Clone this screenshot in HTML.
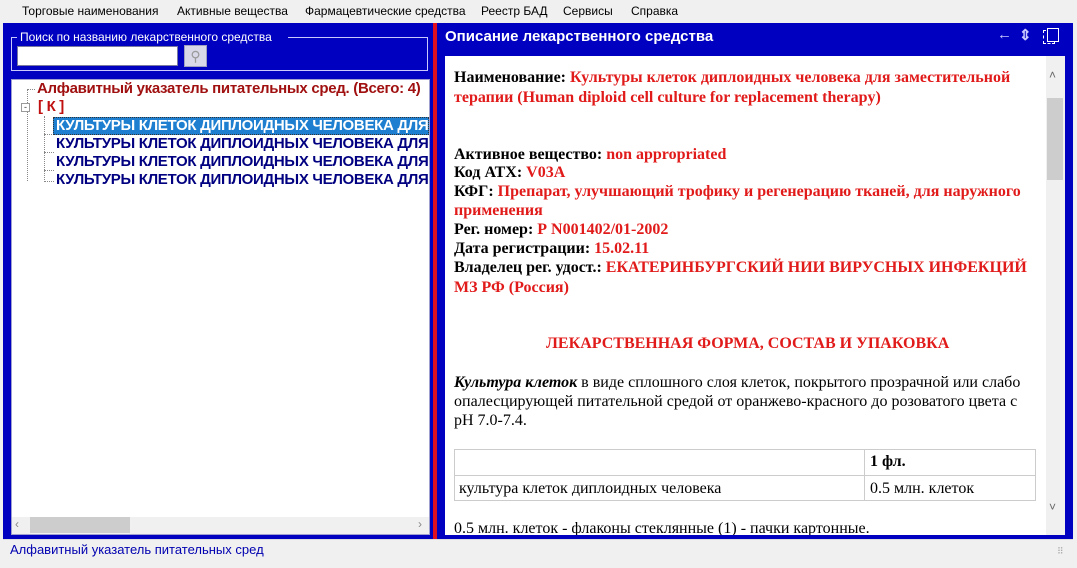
<!DOCTYPE html>
<html><head><meta charset="utf-8"><style>
*{margin:0;padding:0;box-sizing:border-box}
body{width:1077px;height:568px;background:#f0f0f0;position:relative;overflow:hidden;font-family:"Liberation Sans",sans-serif}
.a{position:absolute;white-space:nowrap}
.menu span{position:absolute;top:4px;font-size:12px;color:#000}
.tr{font-size:15px;font-weight:bold;color:#000080;letter-spacing:-0.3px}
.s{font-family:"Liberation Serif",serif;font-size:16px;color:#000}
.b{font-weight:bold}
.r{color:#e11a1a;font-weight:bold}
</style></head><body>
<div class="menu">
<span style="left:22px">Торговые наименования</span>
<span style="left:177px">Активные вещества</span>
<span style="left:305px">Фармацевтические средства</span>
<span style="left:481px">Реестр БАД</span>
<span style="left:563px">Сервисы</span>
<span style="left:631px">Справка</span>
</div>
<div class="a" style="left:3px;top:23px;width:430px;height:516px;background:#0000c0"></div>
<div class="a" style="left:11px;top:37px;width:417px;height:34px;border:1px solid #c8c8ff;border-top:none"></div>
<div class="a" style="left:11px;top:37px;width:6px;border-top:1px solid #c8c8ff"></div>
<div class="a" style="left:288px;top:37px;width:140px;border-top:1px solid #c8c8ff"></div>
<div class="a" style="left:20px;top:30px;font-size:12px;color:#fff">Поиск по названию лекарственного средства</div>
<div class="a" style="left:17px;top:46px;width:161px;height:20px;background:#fff;border:1px solid #7a7aa0"></div>
<div class="a" style="left:184px;top:45px;width:23px;height:22px;background:#d8d8e8;border:1px solid #a0a0c0;color:#999;font-size:14px;text-align:center;line-height:20px">⚲</div>
<div class="a" style="left:11px;top:79px;width:419px;height:456px;background:#fff;border:1px solid #a0a0d0"></div>
<div class="a" style="left:27px;top:89px;height:92px;border-left:1px dotted #888"></div>
<div class="a" style="left:27px;top:89px;width:8px;border-top:1px dotted #888"></div>
<div class="a" style="left:21px;top:103px;width:9px;height:9px;border:1px solid #999;background:#fff;font-size:9px;line-height:6px;text-align:center;color:#333">-</div>
<div class="a" style="left:44px;top:116px;height:66px;border-left:1px dotted #888"></div>
<div class="a" style="left:44px;top:134px;width:10px;border-top:1px dotted #888"></div>
<div class="a" style="left:44px;top:152px;width:10px;border-top:1px dotted #888"></div>
<div class="a" style="left:44px;top:170px;width:10px;border-top:1px dotted #888"></div>
<div class="a" style="left:44px;top:181px;width:10px;border-top:1px dotted #888"></div>
<div class="a" style="left:11px;top:80px;width:418px;height:120px;overflow:hidden">
<div class="a tr" style="left:26px;top:0px;color:#a01010">Алфавитный указатель питательных сред. (Всего: 4)</div>
<div class="a tr" style="left:27px;top:18px;color:#c01010">[ К ]</div>
<div class="a" style="left:42px;top:37px;width:376px;height:18px;background:#1e7fd0;border:1px dotted #333"></div>
<div class="a tr" style="left:45px;top:37px;color:#fff">КУЛЬТУРЫ КЛЕТОК ДИПЛОИДНЫХ ЧЕЛОВЕКА ДЛЯ ЗАМ</div>
<div class="a tr" style="left:45px;top:55px">КУЛЬТУРЫ КЛЕТОК ДИПЛОИДНЫХ ЧЕЛОВЕКА ДЛЯ ЗАМ</div>
<div class="a tr" style="left:45px;top:73px">КУЛЬТУРЫ КЛЕТОК ДИПЛОИДНЫХ ЧЕЛОВЕКА ДЛЯ ЗАМ</div>
<div class="a tr" style="left:45px;top:91px">КУЛЬТУРЫ КЛЕТОК ДИПЛОИДНЫХ ЧЕЛОВЕКА ДЛЯ ЗАМ</div>
</div>
<div class="a" style="left:12px;top:517px;width:417px;height:17px;background:#f0f0f0"></div>
<div class="a" style="left:30px;top:517px;width:100px;height:16px;background:#cdcdcd"></div>
<div class="a" style="left:15px;top:517px;font-size:12px;color:#888">‹</div>
<div class="a" style="left:418px;top:517px;font-size:12px;color:#888">›</div>
<div class="a" style="left:433px;top:23px;width:4px;height:516px;background:#e01020"></div>
<div class="a" style="left:437px;top:23px;width:636px;height:516px;background:#0000c0"></div>
<div class="a" style="left:445px;top:28px;font-size:15px;font-weight:bold;color:#fff">Описание лекарственного средства</div>
<div class="a" style="left:997px;top:26px;font-size:15px;color:#c8c8ff">←</div>
<div class="a" style="left:1019px;top:26px;font-size:15px;color:#c8c8ff;font-weight:bold">⇕</div>
<div class="a" style="left:1043px;top:30px;width:12px;height:14px;border:1px dashed #fff"></div>
<div class="a" style="left:1047px;top:28px;width:12px;height:14px;border:1px solid #fff;background:#0000c0"></div>
<div class="a" style="left:445px;top:56px;width:620px;height:479px;background:#fff;overflow:hidden">
<div class="a" style="left:601px;top:0;width:19px;height:479px;background:#f0f0f0"></div>
<div class="a" style="left:602px;top:42px;width:16px;height:82px;background:#cdcdcd"></div>
<div class="a" style="left:604px;top:12px;font-size:12px;color:#666">˄</div>
<div class="a" style="left:604px;top:444px;font-size:12px;color:#666">˅</div>
<div class="a s" style="left:9px;top:13px"><span class="b">Наименование: </span><span class="r">Культуры клеток диплоидных человека для заместительной</span></div>
<div class="a s r" style="left:9px;top:33px">терапии (Human diploid cell culture for replacement therapy)</div>
<div class="a s" style="left:9px;top:90px"><span class="b">Активное вещество: </span><span class="r">non appropriated</span></div>
<div class="a s" style="left:9px;top:108px"><span class="b">Код АТХ: </span><span class="r">V03A</span></div>
<div class="a s" style="left:9px;top:127px"><span class="b">КФГ: </span><span class="r">Препарат, улучшающий трофику и регенерацию тканей, для наружного</span></div>
<div class="a s r" style="left:9px;top:146px">применения</div>
<div class="a s" style="left:9px;top:165px"><span class="b">Рег. номер: </span><span class="r">Р N001402/01-2002</span></div>
<div class="a s" style="left:9px;top:184px"><span class="b">Дата регистрации: </span><span class="r">15.02.11</span></div>
<div class="a s" style="left:9px;top:203px"><span class="b">Владелец рег. удост.: </span><span class="r">ЕКАТЕРИНБУРГСКИЙ НИИ ВИРУСНЫХ ИНФЕКЦИЙ</span></div>
<div class="a s r" style="left:9px;top:223px">МЗ РФ (Россия)</div>
<div class="a s r" style="left:101px;top:279px">ЛЕКАРСТВЕННАЯ ФОРМА, СОСТАВ И УПАКОВКА</div>
<div class="a s" style="left:9px;top:318px"><b><i>Культура клеток</i></b> в виде сплошного слоя клеток, покрытого прозрачной или слабо</div>
<div class="a s" style="left:9px;top:337px">опалесцирующей питательной средой от оранжево-красного до розоватого цвета с</div>
<div class="a s" style="left:9px;top:356px">pH 7.0-7.4.</div>
<div class="a" style="left:9px;top:393px;width:582px;height:52px;border:1px solid #ccc"></div>
<div class="a" style="left:9px;top:419px;width:582px;border-top:1px solid #ccc"></div>
<div class="a" style="left:419px;top:393px;height:52px;border-left:1px solid #ccc"></div>
<div class="a s b" style="left:425px;top:397px">1 фл.</div>
<div class="a s" style="left:14px;top:424px">культура клеток диплоидных человека</div>
<div class="a s" style="left:425px;top:424px">0.5 млн. клеток</div>
<div class="a s" style="left:9px;top:464px">0.5 млн. клеток - флаконы стеклянные (1) - пачки картонные.</div>
</div>
<div class="a" style="left:3px;top:539px;width:1070px;height:23px;background:#f0f0f0;border-top:1px solid #ddd"></div>
<div class="a" style="left:10px;top:542px;font-size:13px;color:#0000b0">Алфавитный указатель питательных сред</div>
<div class="a" style="left:1057px;top:546px;font-size:9px;color:#aaa">⠿</div>
</body></html>
